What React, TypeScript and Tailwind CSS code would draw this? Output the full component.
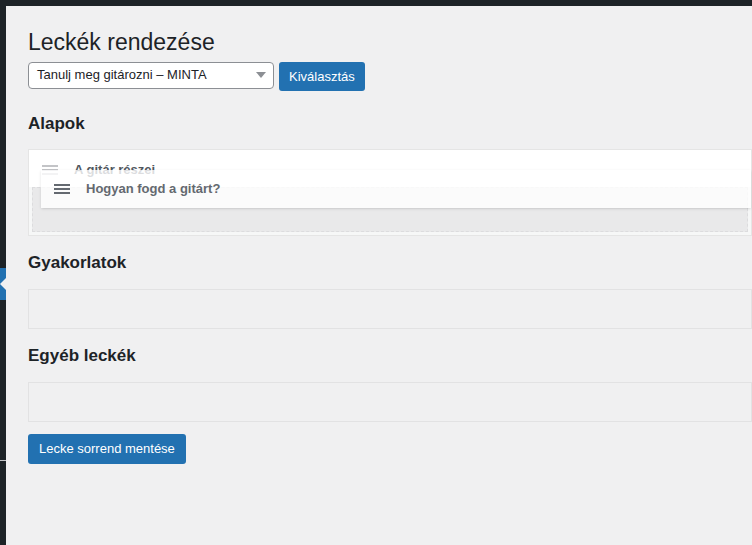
export default function App() {
  const font = { fontFamily: '-apple-system, "Liberation Sans", Roboto, sans-serif' }
  const Handle = ({ c }: { c: string }) => (
    <span className="flex flex-col gap-[2px] w-[16px]">
      <span className={`h-[2px] ${c}`} />
      <span className={`h-[2px] ${c}`} />
      <span className={`h-[2px] ${c}`} />
    </span>
  )
  return (
    <div className="w-[752px] h-[545px] flex flex-col bg-[#1d2327] overflow-hidden" style={font}>
      <div className="h-[6px] shrink-0" />
      <div className="flex flex-1 min-h-0">
        <div className="w-[6px] shrink-0 flex flex-col">
          <div className="h-[262px]" />
          <div className="h-[32px] bg-[#2271b1] relative">
            <span className="absolute right-0 top-[10px] w-0 h-0 border-y-[6px] border-y-transparent border-r-[6px] border-r-[#f0f0f1]" />
          </div>
          <div className="h-[160px]" />
          <div className="h-px bg-[#c3c4c7]" />
        </div>
        <div className="flex-1 bg-[#f0f0f1] pl-[22px] pt-[22px] text-[#1d2327]">
          <h1 className="text-[23px] leading-[29px] font-normal">Leckék rendezése</h1>
          <div className="flex items-center gap-[5px] mt-[2px]">
            <div className="w-[246px] h-[27px] bg-white border border-[#8c8f94] rounded-[4px] flex items-center justify-between pl-[8px] pr-[7px] text-[13px]">
              <span>Tanulj meg gitározni – MINTA</span>
              <span className="w-0 h-0 border-x-[5px] border-x-transparent border-t-[6px] border-t-[#8c8f94]" />
            </div>
            <button className="h-[29px] px-[10px] bg-[#2271b1] text-white text-[13px] font-medium rounded-[3px] mt-[3px]">Kiválasztás</button>
          </div>
          <h2 className="text-[17px] font-semibold mt-[22px] leading-[22px]">Alapok</h2>
          <div className="mt-[14px] h-[87px] bg-[#f6f7f7] border border-[#e5e5e5] relative flex flex-col">
            <div className="h-[37px] bg-white flex items-center gap-[16px] pl-[13px] pt-[2px]">
              <Handle c="bg-[#c3c4c7]" />
              <span className="text-[13px] font-semibold text-[#50575e]">A gitár részei</span>
            </div>
            <div className="mx-[3px] mb-[3px] flex-1 bg-[#e9e9ea] border border-dashed border-[#dcdcde]" />
            <div className="absolute left-[12px] right-0 top-[20px] h-[38px] bg-white/80 flex items-center gap-[16px] pl-[13px] shadow-sm">
              <Handle c="bg-[#646970]" />
              <span className="text-[13px] font-semibold text-[#646970]">Hogyan fogd a gitárt?</span>
            </div>
          </div>
          <h2 className="text-[17px] font-semibold mt-[16px] leading-[22px]">Gyakorlatok</h2>
          <div className="mt-[15px] h-[40px] bg-[#f0f0f1] border border-[#e2e2e3]" />
          <h2 className="text-[17px] font-semibold mt-[16px] leading-[22px]">Egyéb leckék</h2>
          <div className="mt-[15px] h-[40px] bg-[#f0f0f1] border border-[#e2e2e3]" />
          <button className="mt-[12px] h-[30px] px-[11px] bg-[#2271b1] text-white text-[13px] font-medium rounded-[3px]">Lecke sorrend mentése</button>
        </div>
      </div>
    </div>
  )
}
